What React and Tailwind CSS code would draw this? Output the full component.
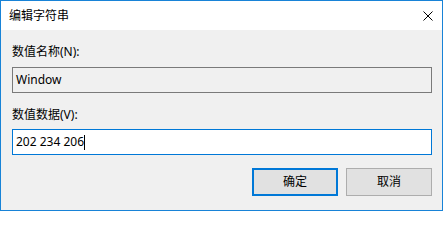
const font = { fontFamily: '"Noto Sans", "Noto Sans CJK SC", sans-serif' }

const App = () => {
    return (
        <div className="w-[443px] h-[211px] flex flex-col border border-[#1883d7] bg-[#f0f0f0] text-[12px] leading-[16px] text-black" style={font}>
            <div className="h-[29px] bg-white flex items-center justify-between pl-[8px] pr-[9px]">
                <span>编辑字符串</span>
                <svg width="10" height="10" viewBox="0 0 10 10">
                    <path d="M0.5 0.5 L9.5 9.5 M9.5 0.5 L0.5 9.5" stroke="#000" strokeWidth="1" fill="none" />
                </svg>
            </div>
            <div className="flex-1 flex flex-col pl-[11px] pr-[10px] pt-[14px]">
                <label>数值名称(N):</label>
                <div className="mt-[7px] h-[26px] border border-[#7a7a7a] bg-[#f0f0f0] flex items-center pl-[3px]">
                    Window
                </div>
                <label className="mt-[14px]">数值数据(V):</label>
                <div className="mt-[6px] h-[26px] border border-[#0078d7] bg-white flex items-center pl-[3px]">
                    <span>202 234 206</span>
                    <span className="w-[1px] h-[15px] bg-black"></span>
                </div>
                <div className="mt-[13px] flex justify-end gap-[8px]">
                    <button className="w-[86px] h-[28px] border-2 border-[#0078d7] bg-[#e1e1e1]">确定</button>
                    <button className="w-[86px] h-[28px] border border-[#adadad] bg-[#e1e1e1]">取消</button>
                </div>
            </div>
        </div>
    )
}

export default App
